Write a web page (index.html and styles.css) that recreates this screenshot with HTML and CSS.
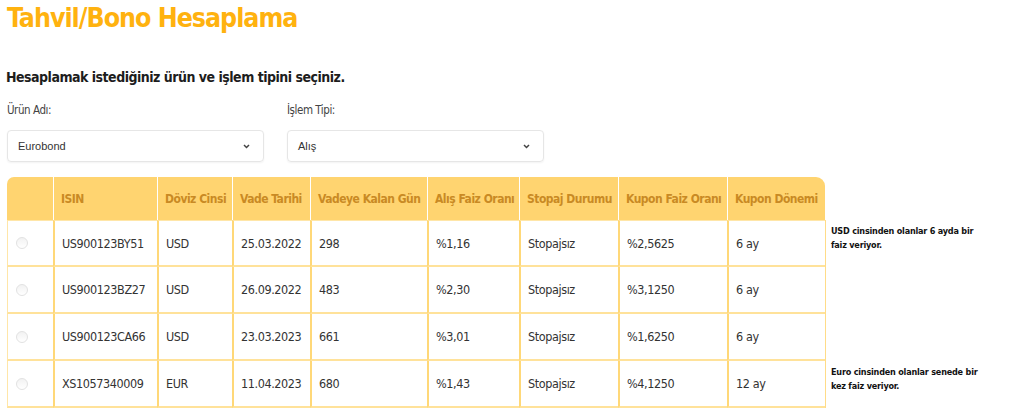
FILE: index.html
```html
<!DOCTYPE html>
<html lang="tr">
<head>
<meta charset="utf-8">
<link rel="stylesheet" href="styles.css">
</head>
<body>
<main class="page">
  <h1 class="title">Tahvil/Bono Hesaplama</h1>
  <h2 class="subtitle">Hesaplamak istediğiniz ürün ve işlem tipini seçiniz.</h2>
  <div class="form-row">
    <div class="field">
      <label class="label">Ürün Adı:</label>
      <div class="select"><span>Eurobond</span><svg class="chev" width="7" height="5" viewBox="0 0 7 5"><path d="M1 1 L3.5 3.5 L6 1" fill="none" stroke="#444" stroke-width="1.5"/></svg></div>
    </div>
    <div class="field">
      <label class="label">İşlem Tipi:</label>
      <div class="select"><span>Alış</span><svg class="chev" width="7" height="5" viewBox="0 0 7 5"><path d="M1 1 L3.5 3.5 L6 1" fill="none" stroke="#444" stroke-width="1.5"/></svg></div>
    </div>
  </div>
  <table class="bonds">
    <colgroup>
      <col class="c-radio"><col class="c-isin"><col class="c-cur"><col class="c-date"><col class="c-days">
      <col class="c-rate"><col class="c-tax"><col class="c-coupon"><col class="c-period"><col class="c-note">
    </colgroup>
    <thead>
      <tr>
        <th class="first"></th>
        <th>ISIN</th>
        <th>Döviz Cinsi</th>
        <th>Vade Tarihi</th>
        <th>Vadeye Kalan Gün</th>
        <th>Alış Faiz Oranı</th>
        <th>Stopaj Durumu</th>
        <th>Kupon Faiz Oranı</th>
        <th class="last">Kupon Dönemi</th>
        <th class="note-cell"></th>
      </tr>
    </thead>
    <tbody>
      <tr>
        <td class="radio-cell"><span class="radio"></span></td>
        <td>US900123BY51</td><td>USD</td><td>25.03.2022</td><td>298</td>
        <td>%1,16</td><td>Stopajsız</td><td>%2,5625</td><td>6 ay</td>
        <td class="note-cell"><p class="note">USD cinsinden olanlar 6 ayda bir faiz veriyor.</p></td>
      </tr>
      <tr>
        <td class="radio-cell"><span class="radio"></span></td>
        <td>US900123BZ27</td><td>USD</td><td>26.09.2022</td><td>483</td>
        <td>%2,30</td><td>Stopajsız</td><td>%3,1250</td><td>6 ay</td>
        <td class="note-cell"></td>
      </tr>
      <tr>
        <td class="radio-cell"><span class="radio"></span></td>
        <td>US900123CA66</td><td>USD</td><td>23.03.2023</td><td>661</td>
        <td>%3,01</td><td>Stopajsız</td><td>%1,6250</td><td>6 ay</td>
        <td class="note-cell"></td>
      </tr>
      <tr>
        <td class="radio-cell"><span class="radio"></span></td>
        <td>XS1057340009</td><td>EUR</td><td>11.04.2023</td><td>680</td>
        <td>%1,43</td><td>Stopajsız</td><td>%4,1250</td><td>12 ay</td>
        <td class="note-cell"><p class="note">Euro cinsinden olanlar senede bir kez faiz veriyor.</p></td>
      </tr>
    </tbody>
  </table>
</main>
</body>
</html>
```

FILE: styles.css
```css
* { box-sizing: border-box; }
html, body { margin: 0; padding: 0; background: #fff; }
body {
  font-family: "DejaVu Sans Condensed", "DejaVu Sans", sans-serif;
  color: #222;
}
.page { padding: 0 7px; }
.title {
  margin: 0;
  padding-top: 3px;
  font-size: 26.5px;
  line-height: 30px;
  letter-spacing: -1px;
  font-weight: bold;
  color: #FFB20F;
}
.subtitle {
  margin: 35px 0 0 -1px;
  font-size: 14px;
  line-height: 18px;
  letter-spacing: -0.5px;
  font-weight: bold;
  color: #1d1d1d;
}
.form-row { display: flex; gap: 23px; margin-top: 16px; }
.field { display: flex; flex-direction: column; width: 257px; }
.label { font-size: 11.5px; line-height: 16px; letter-spacing: -0.45px; color: #444; }
.select {
  margin-top: 12px;
  height: 32px;
  border: 1px solid #e6e6e6;
  border-radius: 4px;
  box-shadow: 0 1px 2px rgba(0,0,0,0.05);
  display: flex;
  align-items: center;
  justify-content: space-between;
  padding: 0 13px 0 10px;
  font-family: "Liberation Sans", Arial, sans-serif;
  font-size: 11px;
  color: #333;
}
.chev { display: block; }
.bonds {
  margin-top: 15px;
  table-layout: fixed;
  width: 1008px;
  border-collapse: separate;
  border-spacing: 0;
  font-size: 12.5px;
  letter-spacing: -0.4px;
  color: #333;
}
.bonds th {
  height: 43px;
  background: #FFD470;
  color: #C98A24;
  font-weight: bold;
  font-size: 12px;
  letter-spacing: -0.5px;
  text-align: left;
  padding: 0 7px;
  border-left: 1px solid #fff;
  white-space: nowrap;
  overflow: hidden;
}
.bonds th.first { border-left: none; border-top-left-radius: 7px; }
.bonds th.last { border-top-right-radius: 9px; }
.bonds th.note-cell { background: transparent; border: none; }
.bonds td {
  height: 47px;
  padding: 0 7px;
  border-left: 2px solid #FFD878;
  border-bottom: 2px solid #FFE29A;
  white-space: nowrap;
  overflow: hidden;
}
.bonds td:first-child { border-left: 1px solid #FFE6A8; }
.bonds td.note-cell { border-left: 1px solid #FFDC88; border-bottom: none; vertical-align: top; padding: 0 0 0 5px; overflow: visible; }
.bonds tbody tr:first-child td { border-top: 1px solid #FFE6A8; }
.bonds tbody tr:first-child td.note-cell { border-top: none; }
.c-radio { width: 46px; }
.c-isin { width: 104px; }
.c-cur { width: 75px; }
.c-date { width: 78px; }
.c-days { width: 117px; }
.c-rate { width: 92px; }
.c-tax { width: 99px; }
.c-coupon { width: 109px; }
.c-period { width: 98px; }
.c-note { width: 190px; }
.radio-cell { padding: 0 0 0 8px !important; }
.radio {
  display: block;
  width: 12px; height: 12px;
  border-radius: 50%;
  border: 1px solid #e2e2e2;
  background: linear-gradient(#f2f2f2, #fff);
}
.note {
  margin: 4px 0 0 0;
  width: 150px;
  white-space: normal;
  font-weight: bold;
  font-size: 9px;
  letter-spacing: -0.2px;
  line-height: 14px;
  color: #111;
}
```
